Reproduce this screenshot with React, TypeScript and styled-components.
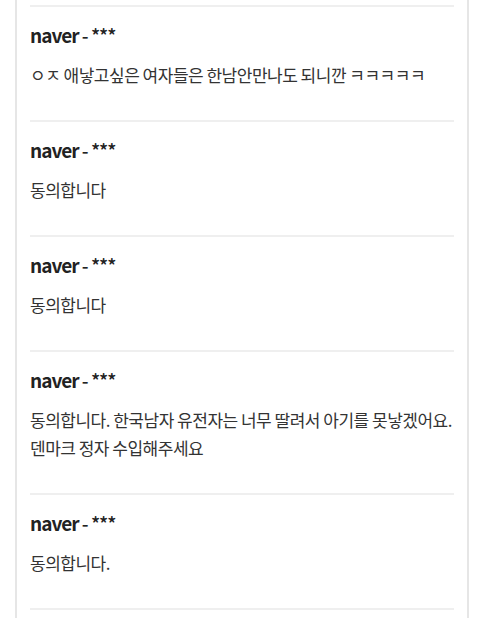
import styled, { createGlobalStyle } from 'styled-components';

const comments = [
  { site: 'naver', user: '***', text: 'ㅇㅈ 애낳고싶은 여자들은 한남안만나도 되니깐 ㅋㅋㅋㅋㅋ' },
  { site: 'naver', user: '***', text: '동의합니다' },
  { site: 'naver', user: '***', text: '동의합니다' },
  {
    site: 'naver',
    user: '***',
    text: '동의합니다. 한국남자 유전자는 너무 딸려서 아기를 못낳겠어요. 덴마크 정자 수입해주세요',
  },
  { site: 'naver', user: '***', text: '동의합니다.' },
];

const GlobalStyle = createGlobalStyle`
  body {
    margin: 0;
    background: #ffffff;
    font-family: 'Noto Sans CJK KR', 'Noto Sans', sans-serif;
    overflow: hidden;
  }
`;

const App = () => {
  return (
    <>
      <GlobalStyle />
      <Page>
        <CommentCard>
          {comments.map((c, i) => (
            <CommentItem key={i}>
              <Author>
                <Site>{c.site}</Site>
                <Masked> - {c.user}</Masked>
              </Author>
              <Body>{c.text}</Body>
            </CommentItem>
          ))}
          <CommentItem />
        </CommentCard>
      </Page>
    </>
  );
};

const Page = styled.div`
  height: 618px;
  overflow: hidden;
`;

const CommentCard = styled.div`
  margin-left: 15px;
  width: 454px;
  min-height: 618px;
  box-sizing: border-box;
  border-left: 2px solid #e6e6e6;
  border-right: 2px solid #e6e6e6;
  padding: 5px 13px 0;
`;

const CommentItem = styled.div`
  border-top: 2px solid #efefef;
  padding: 16px 0 31px;
`;

const Author = styled.div`
  font-size: 19px;
  line-height: 24px;
  color: #222;
  letter-spacing: -1px;
  margin-bottom: 14px;
`;

const Site = styled.span`
  font-weight: 700;
`;

const Masked = styled.span`
  font-weight: 500;
`;

const Body = styled.p`
  margin: 0;
  font-size: 17px;
  line-height: 28px;
  color: #333;
  letter-spacing: -0.5px;
`;

export default App;
